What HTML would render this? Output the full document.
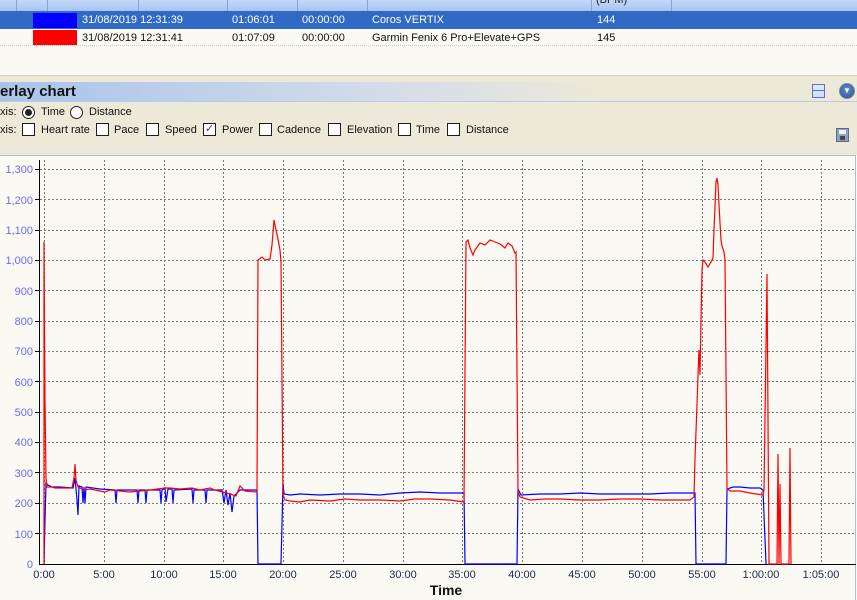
<!DOCTYPE html>
<html><head><style>
body{margin:0;width:857px;height:600px;overflow:hidden;background:#FAF9F4;font-family:"Liberation Sans",sans-serif;font-size:11px;position:relative}
.a{position:absolute;white-space:nowrap}
.t{position:absolute;white-space:nowrap;color:#111;font-size:11px}
.cb{position:absolute;width:13px;height:13px;border:1px solid #1c1c1c;background:#fff;box-sizing:border-box}
.rb{position:absolute;width:13px;height:13px;border:1px solid #1c1c1c;border-radius:50%;background:#fff;box-sizing:border-box}
</style></head><body>
<div class="a" style="left:0;top:0;width:857px;height:11px;background:linear-gradient(#c4d8f6,#a6c4f0);border-bottom:1px solid #8fa9d6"></div>
<div class="a" style="left:16px;top:0;width:1px;height:11px;background:#8aa4d0"></div>
<div class="a" style="left:47px;top:0;width:1px;height:11px;background:#8aa4d0"></div>
<div class="a" style="left:138px;top:0;width:1px;height:11px;background:#8aa4d0"></div>
<div class="a" style="left:227px;top:0;width:1px;height:11px;background:#8aa4d0"></div>
<div class="a" style="left:297px;top:0;width:1px;height:11px;background:#8aa4d0"></div>
<div class="a" style="left:367px;top:0;width:1px;height:11px;background:#8aa4d0"></div>
<div class="a" style="left:591px;top:0;width:1px;height:11px;background:#8aa4d0"></div>
<div class="a" style="left:671px;top:0;width:1px;height:11px;background:#8aa4d0"></div>
<div class="a" style="left:596px;top:-6px;color:#222">(BPM)</div>
<div class="a" style="left:0;top:11px;width:857px;height:18px;background:#316AC5"></div>
<div class="a" style="left:33px;top:13px;width:44px;height:15px;background:#0000ff"></div>
<div class="t" style="left:82px;top:14px;color:#fff">31/08/2019 12:31:39</div>
<div class="t" style="left:232px;top:14px;color:#fff">01:06:01</div>
<div class="t" style="left:302px;top:14px;color:#fff">00:00:00</div>
<div class="t" style="left:372px;top:14px;color:#fff">Coros VERTIX</div>
<div class="t" style="left:597px;top:14px;color:#fff">144</div>
<div class="a" style="left:0;top:29px;width:857px;height:16px;background:#FAF9F4;border-bottom:1px dotted #c8c8c8"></div>
<div class="a" style="left:33px;top:30px;width:44px;height:15px;background:#ff0000"></div>
<div class="t" style="left:82px;top:32px">31/08/2019 12:31:41</div>
<div class="t" style="left:232px;top:32px">01:07:09</div>
<div class="t" style="left:302px;top:32px">00:00:00</div>
<div class="t" style="left:372px;top:32px">Garmin Fenix 6 Pro+Elevate+GPS</div>
<div class="t" style="left:597px;top:32px">145</div>
<div class="a" style="left:0;top:75px;width:857px;height:6px;background:#ECE9D8;border-top:1px solid #d6d2c2;border-bottom:1px solid #b8cbe6"></div>
<div class="a" style="left:0;top:82px;width:857px;height:19px;background:linear-gradient(90deg,#a9c3ea 0%,#d4dcea 45%,#ECE9D8 70%);border-bottom:1px solid #b8cbe6"></div>
<div class="a" style="left:0;top:82px;font-size:15px;font-weight:bold;color:#111;line-height:19px">erlay chart</div>
<div class="a" style="left:812px;top:84px;width:13px;height:14px;border:1px solid #6a6ad0;background:linear-gradient(#d9ecfa,#c7e3f8);box-sizing:border-box"><div style="margin-top:5px;height:1px;background:#6a6ad0"></div></div>
<div class="a" style="left:839px;top:83px;width:16px;height:16px;border-radius:50%;background:radial-gradient(circle at 50% 40%,#5d8fd6,#2c4f8a);border:1px solid #7a8aa0;box-sizing:border-box;color:#fff;font-size:8px;text-align:center;line-height:14px">▼</div>
<div class="a" style="left:0;top:102px;width:857px;height:53px;background:#ECE9D8"></div>
<div class="t" style="left:0;top:106px">xis:</div>
<div class="rb" style="left:22px;top:106px"><div style="width:7px;height:7px;border-radius:50%;background:#222;margin:2px"></div></div>
<div class="t" style="left:41px;top:106px">Time</div>
<div class="rb" style="left:70px;top:106px"></div>
<div class="t" style="left:89px;top:106px">Distance</div>
<div class="t" style="left:0;top:124px">xis:</div>
<div class="cb" style="left:22px;top:123px"></div><div class="t" style="left:41px;top:124px">Heart rate</div>
<div class="cb" style="left:96px;top:123px"></div><div class="t" style="left:114px;top:124px">Pace</div>
<div class="cb" style="left:146px;top:123px"></div><div class="t" style="left:165px;top:124px">Speed</div>
<div class="cb" style="left:203px;top:123px;font-size:11px;line-height:11px;text-align:center;color:#444">✓</div><div class="t" style="left:222px;top:124px">Power</div>
<div class="cb" style="left:259px;top:123px"></div><div class="t" style="left:277px;top:124px">Cadence</div>
<div class="cb" style="left:328px;top:123px"></div><div class="t" style="left:347px;top:124px">Elevation</div>
<div class="cb" style="left:398px;top:123px"></div><div class="t" style="left:416px;top:124px">Time</div>
<div class="cb" style="left:447px;top:123px"></div><div class="t" style="left:466px;top:124px">Distance</div>
<div class="a" style="left:836px;top:128px;width:13px;height:14px;background:#8fa2bd;border:1px solid #5a6c88;box-sizing:border-box"><div style="margin:1px 2px;height:4px;background:#eef"></div><div style="margin:2px 3px 0;height:4px;background:#445"></div></div>
<div class="a" style="left:0;top:155px;width:856px;height:445px;border-top:1px solid #a9bfdc;border-right:1px solid #a9bfdc;box-sizing:border-box"></div>
<svg class="a" style="left:0;top:0" width="857" height="600">
<g stroke="#777" stroke-width="1" stroke-dasharray="2,2" fill="none">
<path d="M40 533.5H856M40 503.5H856M40 472.5H856M40 442.5H856M40 412.5H856M40 381.5H856M40 351.5H856M40 321.5H856M40 290.5H856M40 260.5H856M40 230.5H856M40 199.5H856M40 169.5H856"/>
<path d="M44.5 160V564M104.5 160V564M164.5 160V564M223.5 160V564M283.5 160V564M343.5 160V564M403.5 160V564M462.5 160V564M522.5 160V564M582.5 160V564M642.5 160V564M702.5 160V564M761.5 160V564M821.5 160V564"/>
</g>
<path d="M39.5 160V564.5H856" stroke="#000" fill="none"/>
<g stroke="#000"><path d="M35 533.5h5M35 503.5h5M35 472.5h5M35 442.5h5M35 412.5h5M35 381.5h5M35 351.5h5M35 321.5h5M35 290.5h5M35 260.5h5M35 230.5h5M35 199.5h5M35 169.5h5"/></g>
<g font-size="11" fill="#6b6bf0" text-anchor="end" font-family="Liberation Sans">
<text x="33" y="568">0</text><text x="33" y="538">100</text><text x="33" y="507">200</text><text x="33" y="477">300</text><text x="33" y="446">400</text><text x="33" y="416">500</text><text x="33" y="386">600</text><text x="33" y="355">700</text><text x="33" y="325">800</text><text x="33" y="295">900</text><text x="33" y="264">1,000</text><text x="33" y="234">1,100</text><text x="33" y="204">1,200</text><text x="33" y="173">1,300</text>
</g>
<g font-size="11" fill="#1a2a4a" text-anchor="middle" font-family="Liberation Sans">
<text x="44" y="578">0:00</text><text x="104" y="578">5:00</text><text x="164" y="578">10:00</text><text x="223" y="578">15:00</text><text x="283" y="578">20:00</text><text x="343" y="578">25:00</text><text x="403" y="578">30:00</text><text x="462" y="578">35:00</text><text x="522" y="578">40:00</text><text x="582" y="578">45:00</text><text x="642" y="578">50:00</text><text x="702" y="578">55:00</text><text x="761" y="578">1:00:00</text><text x="821" y="578">1:05:00</text>
</g>
<text x="446" y="595" font-size="14" font-weight="bold" text-anchor="middle" fill="#111" font-family="Liberation Sans">Time</text>
<polyline fill="none" stroke="#0000ff" stroke-width="1.2" points="44,564 45,520 46,483 48,485 52,487 60,487 73,488 75,478 77,500 78,515 79,486 82,487 83,503 84,487 85,503 86,487 100,489 115,490 116,503 117,490 137,490 138,503 139,490 145,490 146,503 147,490 160,490 161,503 162,490 165,488 166,502 168,489 172,489 173,503 174,490 192,489 193,503 194,490 205,490 206,503 207,490 222,490 224,503 226,490 228,505 230,493 232,512 234,496 240,490 257,490 258,564 281,564 283,483 284,494 290,495 300,494 320,495 340,494 360,494 380,495 400,493 420,492 440,493 464,493 465,564 517,564 518,489 521,495 540,494 560,494 580,493 600,494 620,494 650,494 670,493 695,493 696,564 726,564 727,489 733,487 740,487 750,488 760,488 763,490 766,564"/>
<polyline fill="none" stroke="#ff0000" stroke-width="1.2" points="44,564 44,242 45,400 46,478 47,487 52,487 55,488 72,488 74,478 75,464 76,480 78,487 80,488 84,490 90,489 100,491 105,492 110,490 130,492 150,490 165,488 170,488 180,489 192,488 200,490 210,488 215,490 230,494 236,496 240,486 245,491 257,492 258,260 262,257 265,260 270,259 272,245 274,220 276,230 278,239 280,250 281,262 283,495 285,500 290,501 300,502 310,500 330,501 345,499 360,500 380,500 400,501 415,499 430,499 450,500 464,502 466,242 468,240 470,248 473,255 475,250 480,243 485,245 490,240 495,242 500,244 505,248 508,243 512,246 515,253 516,252 518,492 520,497 530,500 545,499 560,499 580,500 600,500 620,499 640,499 660,500 680,500 690,500 694,497 695,458 697,405 698,375 699,350 700,375 701,320 702,270 703,260 705,262 708,267 711,262 713,258 714,230 716,182 717,178 718,185 719,205 721,240 722,246 724,252 725,260 727,488 730,491 740,491 750,493 763,495 764,490 767,274 769,564 777,564 778,454 779,564 780,484 781,564 789,564 790,448 791,564"/>
</svg>
</body></html>
